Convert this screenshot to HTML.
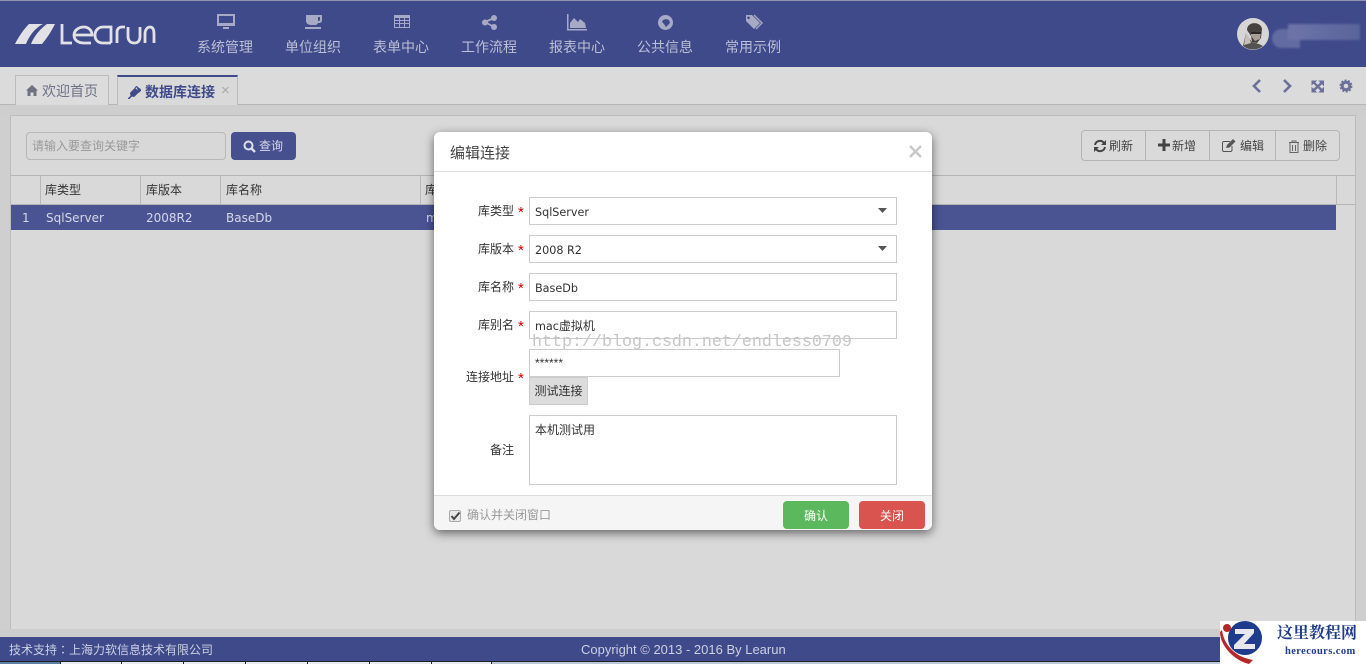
<!DOCTYPE html>
<html><head><meta charset="utf-8"><style>
*{box-sizing:border-box}
html,body{margin:0;padding:0;width:1366px;height:664px;overflow:hidden;background:#cfcfcf;font-family:"Liberation Sans","Noto Sans CJK SC",sans-serif;font-size:12px;color:#333}
.a{position:absolute;white-space:nowrap}
.d{font-family:"DejaVu Sans",sans-serif;font-size:11.2px}
#top{left:0;top:0;width:1366px;height:67px;background:#3f4a8b;border-top:1px solid #8f93ad}
.nav{color:#bcbfd5;font-size:14px;width:70px;text-align:center;top:38px;line-height:18px}
.ic{fill:#a7aac4}
.tab{font-size:14px;line-height:26px}
.hd{font-size:12px;top:182px;color:#333;line-height:16px}
.row{font-family:"DejaVu Sans",sans-serif;font-size:12px;top:210px;color:#d6d8e8;line-height:16px}
.inp{background:#fff;border:1px solid #ccc;left:529px;width:368px;height:28px;font-size:12px;line-height:28px;padding-left:5px;color:#333}
.lb{font-size:12px;color:#333;text-align:right;left:450px;width:64px;line-height:16px}
.st{color:#c00;font-size:15px;left:518px;line-height:16px}
.tb{font-size:12px;color:#444;top:137px;line-height:18px}
.sep{top:662px;width:1px;height:2px;background:#222}
</style></head><body>
<div class="a" id="top"></div>
<svg class="a" style="left:14px;top:22px" width="145" height="26" viewBox="0 0 145 26"><path d="M1 22 C5 14 10 7 15 2 H29 C21 6 15 14 12 22 Z M17 22 C20 14 27 6 33 2 H41 C37 10 33 16 28 22 Z" fill="#e2e2e6"/><path d="M48 2 V21 H58 M61 13 H78 C78 8 74 5 70 5 C64 5 60 9 60 13 C60 18 64 21 70 21 H77 M97 21 V5 H89 C84 5 81 9 81 13 C81 18 84 21 89 21 H97 M103 21 V10 C103 7 105 5 108 5 H111 M114 5 V14 C114 19 117 21 120 21 C124 21 126 19 126 14 V5 M131 21 V12 C131 7 134 5 136 5 C139 5 140 8 140 12 V21" fill="none" stroke="#e2e2e6" stroke-width="2.800"/></svg>

<svg class="a" style="left:216px;top:13px" width="20" height="18" viewBox="0 0 20 18"><path class="ic" d="M1 1 H19 V13 H1 Z M3 3 V10 H17 V3 Z M7 14 H13 V16 H7 Z" fill-rule="evenodd"/></svg>
<svg class="a" style="left:304px;top:14px" width="20" height="16" viewBox="0 0 20 16"><path class="ic" d="M2 1 H18 V6 C18 9 16 9 14 9 C13 11 12 11 10 11 H7 C4 11 2 9 2 7 Z M14 3 V7 C16 7 16 6 16 5 V3 Z M1 13 H17 V15 H1 Z" fill-rule="evenodd"/></svg>
<svg class="a" style="left:394px;top:15px" width="16" height="14" viewBox="0 0 16 14"><path class="ic" d="M0 0 H16 V13 H0 Z M1 3 V5 H5 V3 Z M6 3 V5 H10 V3 Z M11 3 V5 H15 V3 Z M1 6 V8 H5 V6 Z M6 6 V8 H10 V6 Z M11 6 V8 H15 V6 Z M1 9 V12 H5 V9 Z M6 9 V12 H10 V9 Z M11 9 V12 H15 V9 Z" fill-rule="evenodd"/></svg>
<svg class="a" style="left:482px;top:15px" width="16" height="15" viewBox="0 0 16 15"><path d="M12 3 L3 7 L12 12" fill="none" stroke="#a7aac4" stroke-width="1.800"/><circle class="ic" cx="12" cy="3" r="3"/><circle class="ic" cx="3" cy="7.500" r="3"/><circle class="ic" cx="12" cy="12" r="3"/></svg>
<svg class="a" style="left:567px;top:14px" width="21" height="17" viewBox="0 0 21 17"><path class="ic" d="M0 0 H1.500 V15 H20 V16.500 H0 Z M3 14 V9 L7 4 L11 8 L13 5 L18 9 L19 14 Z"/></svg>
<svg class="a" style="left:658px;top:15px" width="15" height="15" viewBox="0 0 15 15"><path class="ic" fill-rule="evenodd" d="M7.500 0 A7.500 7.500 0 1 0 7.500 15 A7.500 7.500 0 1 0 7.500 0 Z M5 5 L8 4 L11 5 L12 8 L8 12 L6 9 L4 7 Z"/></svg>
<svg class="a" style="left:745px;top:14px" width="18" height="17" viewBox="0 0 18 17"><path class="ic" fill-rule="evenodd" d="M1 1 H7 L15 9 L9 15 L1 7 Z M3.500 2.500 A1.300 1.300 0 1 0 3.600 2.500 Z"/><path d="M9 1 L17 9 L11 15" fill="none" stroke="#a7aac4" stroke-width="1.400"/></svg>

<div class="a nav" style="left:190px">系统管理</div>
<div class="a nav" style="left:278px">单位组织</div>
<div class="a nav" style="left:366px">表单中心</div>
<div class="a nav" style="left:454px">工作流程</div>
<div class="a nav" style="left:542px">报表中心</div>
<div class="a nav" style="left:630px">公共信息</div>
<div class="a nav" style="left:718px">常用示例</div>

<div class="a" style="left:1272px;top:29px;width:28px;height:19px;background:#6d75a8;border-radius:10px 0 0 10px;opacity:.8;filter:blur(1px)"></div>
<div class="a" style="left:1288px;top:24px;width:72px;height:16px;background:linear-gradient(90deg,#6d75a8,#5a649b);filter:blur(1px)"></div>
<svg class="a" style="left:1237px;top:18px" width="32" height="32" viewBox="0 0 32 32"><circle cx="16" cy="16" r="16" fill="#d6d6d6"/><path d="M10 12 C10 3 24 3 25 11 L24 20 L20 25 L15 24 L14 18 Z" fill="#45423f"/><path d="M14 14 H24 L23 21 L18 23 L14 18 Z" fill="#a89f96"/><path d="M14 14 H24 V16 H14 Z" fill="#2c2a28"/><path d="M6 28 L9 15 L12 20 L15 24 L22 26 L26 28 A16 16 0 0 1 6 28 Z" fill="#55534f"/><path d="M7 27 L9 15 L12 19 L14 25 Z" fill="#c9c0b8"/></svg>

<div class="a" style="left:0;top:67px;width:1366px;height:37px;background:#dbdbdb"></div>
<div class="a" style="left:0;top:104px;width:1366px;height:1px;background:#b5b5b5"></div>
<div class="a" style="left:0;top:105px;width:1366px;height:10px;background:#cecece"></div>
<div class="a" style="left:15px;top:75px;width:94px;height:30px;background:#dcdcdc;border:1px solid #bbb;border-bottom:0"></div>
<svg class="a" style="left:26px;top:85px" width="12" height="11" viewBox="0 0 12 11"><path d="M6 0 L12 5.500 L10.500 5.500 V11 H7.500 V7.500 H4.500 V11 H1.500 V5.500 H0 Z" fill="#6f7180"/></svg>
<div class="a tab" style="left:42px;top:78px;color:#6e7188">欢迎首页</div>
<div class="a" style="left:117px;top:75px;width:121px;height:30px;background:#d9d9d9;border:1px solid #bbb;border-top:2px solid #3f4a8b;border-bottom:0"></div>
<svg class="a" style="left:128px;top:86px" width="13" height="13" viewBox="0 0 13 13"><path d="M0 13 L3 10 L2.500 7 L7 2.500 L10.500 6 L6 10.500 L3.500 10 L1 13 Z M7 2 L9 0 M11 6 L13 4 L9 1 Z" fill="#3f4a8b" stroke="#3f4a8b"/></svg>
<div class="a tab" style="left:145px;top:79px;color:#3f4a8b;font-weight:bold;font-size:14px">数据库连接</div>
<div class="a" style="left:221px;top:84px;color:#aaa;font-size:15px;line-height:14px">×</div>

<svg class="a" style="left:1250px;top:78px" width="106" height="16" viewBox="0 0 106 16"><path d="M10 2 L4 8 L10 14 M34 2 L40 8 L34 14" fill="none" stroke="#6a7099" stroke-width="2.600"/><path d="M62 3 H66 L64.500 4.500 L72 11.500 L73.500 10 V14 L69.500 14 L71 12.500 L63.500 5 L62 6.500 Z M73.500 3 V7 L72 5.500 L64.500 12.500 L66 14 H62 V10 L63.500 11.500 L71 4.500 L69.500 3 Z" fill="#6a7099" stroke="#6a7099"/><circle cx="96" cy="8" r="3.800" fill="none" stroke="#6a7099" stroke-width="3"/><circle cx="96" cy="8" r="5.700" fill="none" stroke="#6a7099" stroke-width="1.600" stroke-dasharray="2 1.600"/></svg>

<div class="a" style="left:10px;top:115px;width:1346px;height:515px;background:#d9d9d9;border:1px solid #bcbcbc"></div>
<div class="a" style="left:26px;top:132px;width:200px;height:28px;background:#d8d8d8;border:1px solid #b8b8b8;border-radius:4px;color:#999;font-size:12px;line-height:26px;padding-left:5px">请输入要查询关键字</div>
<div class="a" style="left:231px;top:132px;width:65px;height:28px;background:#46508f;border-radius:4px;color:#d6d8e8;font-size:12px;line-height:28px;padding-left:28px">查询</div>
<svg class="a" style="left:243px;top:140px" width="13" height="13" viewBox="0 0 13 13"><circle cx="5.500" cy="5.500" r="4" fill="none" stroke="#dcdee8" stroke-width="2"/><path d="M8.500 8.500 L12 12" stroke="#dcdee8" stroke-width="2.400"/></svg>

<div class="a" style="left:1081px;top:130px;width:259px;height:31px;border:1px solid #b4b4b4;border-radius:4px;background:#dadada"></div>
<div class="a" style="left:1145px;top:131px;width:1px;height:29px;background:#b4b4b4"></div>
<div class="a" style="left:1209px;top:131px;width:1px;height:29px;background:#b4b4b4"></div>
<div class="a" style="left:1275px;top:131px;width:1px;height:29px;background:#b4b4b4"></div>
<svg class="a" style="left:1093px;top:139px" width="14" height="14" viewBox="0 0 14 14"><path d="M2 6 A5 5 0 0 1 11 4 M12 8 A5 5 0 0 1 3 10" fill="none" stroke="#444" stroke-width="2"/><path d="M13 1 V6 H8 Z M1 13 V8 H6 Z" fill="#444"/></svg>
<div class="a tb" style="left:1109px">刷新</div>
<svg class="a" style="left:1158px;top:139px" width="12" height="12" viewBox="0 0 12 12"><path d="M4.500 0 H7.500 V4.500 H12 V7.500 H7.500 V12 H4.500 V7.500 H0 V4.500 H4.500 Z" fill="#444"/></svg>
<div class="a tb" style="left:1172px">新增</div>
<svg class="a" style="left:1222px;top:139px" width="14" height="13" viewBox="0 0 14 13"><path d="M10 7 V11 C10 12 9.500 12.500 8.500 12.500 H2 C1 12.500 .5 12 .5 11 V4 C.5 3 1 2.500 2 2.500 H8" fill="none" stroke="#555"/><path d="M4 9 L5 6 L11 0 L13.500 2.500 L7.500 8.500 Z" fill="#555"/></svg>
<div class="a tb" style="left:1240px">编辑</div>
<svg class="a" style="left:1288px;top:140px" width="12" height="13" viewBox="0 0 12 13"><path d="M1 2.500 H11 M4 2.500 V1 H8 V2.500 M2 3 V12.500 H10 V3 M4.500 5 V11 M7.500 5 V11" fill="none" stroke="#666"/></svg>
<div class="a tb" style="left:1303px">删除</div>

<div class="a" style="left:11px;top:175px;width:1344px;height:1px;background:#b4b4b4"></div>
<div class="a" style="left:11px;top:204px;width:1344px;height:1px;background:#b4b4b4"></div>
<div class="a" style="left:40px;top:176px;width:1px;height:28px;background:#b8b8b8"></div>
<div class="a" style="left:140px;top:176px;width:1px;height:28px;background:#b8b8b8"></div>
<div class="a" style="left:220px;top:176px;width:1px;height:28px;background:#b8b8b8"></div>
<div class="a" style="left:420px;top:176px;width:1px;height:28px;background:#b8b8b8"></div>
<div class="a" style="left:1336px;top:176px;width:1px;height:28px;background:#b8b8b8"></div>
<div class="a hd" style="left:45px">库类型</div>
<div class="a hd" style="left:146px">库版本</div>
<div class="a hd" style="left:226px">库名称</div>
<div class="a hd" style="left:425px">库</div>
<div class="a" style="left:11px;top:205px;width:1325px;height:25px;background:#4a5493"></div>
<div class="a row" style="left:22px">1</div>
<div class="a row" style="left:46px">SqlServer</div>
<div class="a row" style="left:146px">2008R2</div>
<div class="a row" style="left:226px">BaseDb</div>
<div class="a row" style="left:426px">m</div>

<div class="a" style="left:0;top:629px;width:1366px;height:8px;background:#cdcdcd"></div>
<div class="a" style="left:0;top:637px;width:1366px;height:24px;background:#3f4a8b"></div>
<div class="a" style="left:9px;top:638px;color:#ccd0e2;font-size:12px;line-height:24px">技术支持<span style="font-family:'Noto Sans CJK TC',sans-serif">：</span>上海力软信息技术有限公司</div>
<div class="a" style="left:581px;top:638px;color:#ccd0e2;font-size:13px;line-height:24px">Copyright © 2013 - 2016 By Learun</div>
<div class="a" style="left:0;top:661px;width:1366px;height:3px;background:#e8ecf2;border-top:1px solid #222"></div>
<div class="a" style="left:0;top:662px;width:60px;height:2px;background:#5b7fa6"></div>
<div class="a" style="left:491px;top:662px;width:875px;height:2px;background:#b8c8d8"></div>
<div class="a sep" style="left:60px"></div><div class="a sep" style="left:121px"></div><div class="a sep" style="left:183px"></div><div class="a sep" style="left:245px"></div><div class="a sep" style="left:307px"></div><div class="a sep" style="left:369px"></div><div class="a sep" style="left:431px"></div><div class="a sep" style="left:491px"></div>

<div class="a" style="left:434px;top:132px;width:498px;height:398px;background:#fff;border-radius:6px;box-shadow:0 3px 10px rgba(0,0,0,.55)"></div>
<div class="a" style="left:434px;top:171px;width:498px;height:1px;background:#ddd"></div>
<div class="a" style="left:450px;top:144px;font-size:15px;line-height:20px;color:#444">编辑连接</div>
<svg class="a" style="left:909px;top:145px" width="13" height="13" viewBox="0 0 13 13"><path d="M1 1 L12 12 M12 1 L1 12" stroke="#c8c8c8" stroke-width="2.400"/></svg>

<div class="a lb" style="top:203px">库类型</div><div class="a st" style="top:205px">*</div>
<div class="a inp d" style="top:197px;font-size:11.2px;line-height:27px;padding-top:1px">SqlServer</div>
<svg class="a" style="left:878px;top:208px" width="9" height="5"><path d="M0 0 H9 L4.500 5 Z" fill="#555"/></svg>
<div class="a lb" style="top:241px">库版本</div><div class="a st" style="top:243px">*</div>
<div class="a inp d" style="top:235px;font-size:11.2px;line-height:27px;padding-top:1px">2008 R2</div>
<svg class="a" style="left:878px;top:246px" width="9" height="5"><path d="M0 0 H9 L4.500 5 Z" fill="#555"/></svg>
<div class="a lb" style="top:279px">库名称</div><div class="a st" style="top:281px">*</div>
<div class="a inp d" style="top:273px;font-size:11.2px;line-height:27px;padding-top:1px">BaseDb</div>
<div class="a lb" style="top:317px">库别名</div><div class="a st" style="top:319px">*</div>
<div class="a inp" style="top:311px"><span class="d">mac</span>虚拟机</div>
<div class="a lb" style="top:369px">连接地址</div><div class="a st" style="top:371px">*</div>
<div class="a inp" style="top:349px;width:311px;line-height:26px">******</div>
<div class="a" style="left:529px;top:377px;width:59px;height:28px;background:#dcdcdc;border:1px solid #ccc;font-size:12px;line-height:27px;text-align:center">测试连接</div>
<div class="a lb" style="top:442px">备注</div>
<div class="a inp" style="top:415px;height:70px;line-height:28px">本机测试用</div>
<div class="a" style="left:532px;top:333px;font-family:'Liberation Mono',monospace;font-size:16.670px;line-height:20px;color:#c6c6c6">http://blog.csdn.net/endless0709</div>

<div class="a" style="left:434px;top:495px;width:498px;height:35px;background:#f5f5f5;border-top:1px solid #ddd;border-radius:0 0 6px 6px"></div>
<div class="a" style="left:449px;top:510px;width:12px;height:12px;background:#e8e8e8;border:1px solid #aaa;border-radius:2px"></div>
<svg class="a" style="left:450px;top:511px" width="11" height="10" viewBox="0 0 11 10"><path d="M1.500 5 L4 8 L9.500 1.500" fill="none" stroke="#444" stroke-width="2"/></svg>
<div class="a" style="left:467px;top:506px;color:#999;font-size:12px;line-height:18px">确认并关闭窗口</div>
<div class="a" style="left:783px;top:501px;width:66px;height:28px;background:#5cb85c;border-radius:4px;color:#fff;font-size:12px;line-height:30px;text-align:center">确认</div>
<div class="a" style="left:859px;top:501px;width:66px;height:28px;background:#d9534f;border-radius:4px;color:#fff;font-size:12px;line-height:30px;text-align:center">关闭</div>

<div class="a" style="left:1220px;top:621px;width:146px;height:43px;background:#fff"></div>
<svg class="a" style="left:1219px;top:621px" width="56" height="43" viewBox="0 0 56 43"><circle cx="26" cy="17" r="17" fill="#1f3c8c"/><path d="M3 9 C5 24 16 36 34 39 L30 43 C14 39 1 24 1 11 Z" fill="#b5282a"/><circle cx="8" cy="7" r="4" fill="#b5282a"/><path d="M16 8 H35 V12 L25 23 H36 V28 H15 V24 L26 13 H16 Z" fill="#e8e8ec"/></svg>
<div class="a" style="left:1277px;top:621px;font-family:'Noto Serif CJK SC',serif;font-weight:bold;font-size:16px;line-height:22px;color:#1f3c8c">这里教程网</div>
<div class="a" style="left:1285px;top:645px;font-family:'Liberation Serif',serif;font-weight:bold;font-size:10.500px;line-height:14px;color:#1f3c8c;letter-spacing:.4px">herecours.com</div>
</body></html>
